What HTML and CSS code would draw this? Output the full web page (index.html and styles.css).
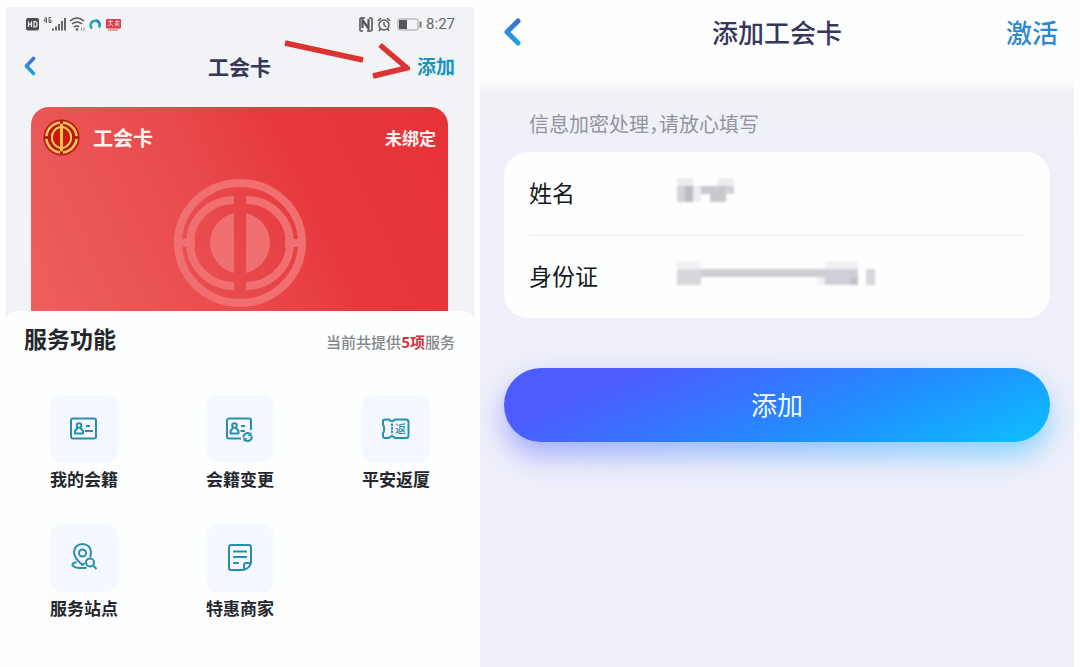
FILE: index.html
```html
<!DOCTYPE html>
<html lang="zh-CN">
<head>
<meta charset="utf-8">
<meta name="viewport" content="width=device-width, initial-scale=1">
<title>工会卡</title>
<link rel="stylesheet" href="styles.css">
</head>
<body>
<svg class="defs" width="0" height="0" aria-hidden="true">
  <defs>
    <linearGradient id="back-fill" x1="0" y1="0" x2="0" y2="1">
      <stop offset="0" stop-color="#3b6fd0"/><stop offset="1" stop-color="#22a6e0"/>
    </linearGradient>
    <symbol id="emblem" viewBox="0 0 134 130">
      <g fill="none" stroke="currentColor" stroke-width="8">
        <ellipse cx="67" cy="65" rx="62" ry="60"/>
        <path d="M61 22A44 43 0 0 0 61 108M73 22A44 43 0 0 1 73 108"/>
        <path d="M9 65H22M112 65H125"/>
      </g>
      <path fill="currentColor" d="M61 35A32 31 0 0 0 61 95ZM73 35A32 31 0 0 1 73 95Z"/>
    </symbol>
  </defs>
</svg>

<div class="screens">
  <section class="screen wallet">
    <div class="status">
      <div class="status-group">
        <svg width="100" height="18" viewBox="0 0 100 18" aria-hidden="true">
          <rect x="1" y="3" width="13" height="12.500" rx="2" fill="#4c4d50"/>
          <path d="M3.500 6.500v5.500M6.500 6.500v5.500M3.500 9.200h3M9 6.500v5.500h1q2 0 2-2.700t-2-2.800z" fill="none" stroke="#f4f5f7" stroke-width="1.200"/>
          <path d="M21 2l-2 4h3M21.500 3v5M26 2.500h-2v5h2V5h-1" fill="none" stroke="#55565a"/>
          <path d="M28 15.500v-2M31 15.500v-4M34 15.500V9M37 15.500V6M40 15.500V3" stroke="#55565a" stroke-width="1.800"/>
          <path d="M45 6q7-6 14 0M47 9q5-4 10 0M49 12q3-2 5 0" fill="none" stroke="#55565a" stroke-width="1.500"/>
          <circle cx="52" cy="14.500" r="1.300" fill="#55565a"/><path d="M56.500 12.500v3M59 12.500v3" stroke="#8a8b8e"/>
          <path d="M67 13.500a4.500 4.500 0 1 1 7-1" fill="none" stroke="#24a5ad" stroke-width="2.600"/>
          <path d="M71 5q4 1 4 6" fill="none" stroke="#3186c8" stroke-width="2"/>
          <rect x="81" y="4" width="15" height="9.500" rx="1" fill="#dc3d4b"/>
          <path d="M83 6.500h5M85.500 5v4M83 11l2.500-2 2.500 2M90 6.500h4.500M89.500 9h5M92 5v4l-2 2.500M92 9l2 2.500" fill="none" stroke="#fbd9d7" stroke-width=".9"/>
          <path d="M83 15h10" stroke="#ee8b63" stroke-width="1.500"/>
        </svg>
      </div>
      <div class="status-group">
        <svg width="64" height="18" viewBox="0 0 64 18" aria-hidden="true">
          <g fill="none" stroke="#55565a"><path d="M4.500 13V5l6 8.500V4" stroke-width="2.200"/><path d="M7 3H3q-1 0-1 1v11q0 1 1 1h2M9 16h4q1 0 1-1V4q0-1-1-1h-2" stroke-width="1.600"/></g>
          <g fill="none" stroke="#55565a" stroke-width="1.400"><circle cx="26" cy="10" r="5"/><path d="M26 7v3l2 2M20 6l3-3M32 6l-3-3M22.500 14l-1.500 2M29.500 14l1.500 2"/></g>
          <rect x="40" y="4" width="20" height="11" rx="1.500" fill="none" stroke="#9b9c9f"/>
          <rect x="41" y="5" width="8" height="9" fill="#55565a"/><path d="M62.500 6.500v6" stroke="#77787b" stroke-width="2"/>
        </svg>
        <span>8:27</span>
      </div>
    </div>

    <header class="nav">
      <button class="back" type="button" aria-label="返回">
        <svg width="12" height="20" viewBox="0 0 12 20"><path d="M9.500 2.500L2.500 10l7 7.500" fill="none" stroke="url(#back-fill)" stroke-width="3.600" stroke-linecap="round" stroke-linejoin="round"/></svg>
      </button>
      <h1>工会卡</h1>
      <a class="action" href="#add">添加</a>
    </header>
    <svg class="pointer" width="126" height="40" viewBox="0 0 126 40" aria-hidden="true">
      <g fill="none" stroke="#db332f" stroke-width="5.500"><path d="M1 3L79 20"/><path d="M96 5L123 28L89 36"/></g>
    </svg>

    <article class="card">
      <div class="card-head">
        <svg class="badge" viewBox="0 0 38 38" aria-hidden="true">
          <circle cx="19" cy="19" r="18.500" fill="#b51b16"/>
          <g fill="none" stroke="#f8c552" stroke-width="2.200">
            <path d="M17.500 3.500A15.600 15.600 0 0 0 3.500 17.500M3.500 20.500A15.600 15.600 0 0 0 17.500 34.500M20.500 3.500A15.600 15.600 0 0 1 34.500 17.500M34.500 20.500A15.600 15.600 0 0 1 20.500 34.500" stroke-width="2.600"/>
            <path d="M17.500 8.300A11 11 0 0 0 17.500 29.700M20.500 8.300A11 11 0 0 1 20.500 29.700"/>
            <circle cx="19" cy="19" r="7.500" fill="#cf160f" stroke="none"/>
            <path d="M19 5V33" stroke="#ffc64b" stroke-width="3"/>
            <path d="M3 19h5M30 19h5" stroke="#b51b16" stroke-width="2"/>
          </g>
        </svg>
        <h2>工会卡</h2>
        <span class="state">未绑定</span>
      </div>
      <svg class="watermark" aria-hidden="true"><use href="#emblem"/></svg>
    </article>

    <section class="sheet">
      <div class="sheet-head">
        <h2>服务功能</h2>
        <p>当前共提供<strong>5项</strong>服务</p>
      </div>
      <nav class="services">
        <a href="#membership">
          <span class="tile"><svg class="icon" viewBox="0 0 30 30"><rect x="2" y="4.500" width="25" height="20" rx="2"/><circle cx="10" cy="11.500" r="2.300"/><path d="M8.500 14L6 17v2.500h8V17l-2.500-3M17 12h4M16 17h8"/></svg></span>
          <span>我的会籍</span>
        </a>
        <a href="#change">
          <span class="tile"><svg class="icon" viewBox="0 0 30 30"><path d="M16 24.500H4a2 2 0 0 1-2-2v-16a2 2 0 0 1 2-2h20a2 2 0 0 1 2 2V16"/><circle cx="9.500" cy="11.500" r="2.300"/><path d="M8 14l-2.500 3v2.500h8V17L11 14M16 12h4M15.500 17h4.500"/><path d="M18.500 23.500a4 4 0 0 1 6.500-3.500M26.500 22a4 4 0 0 1-6.500 4"/><path class="solid" d="M26.500 18v4h-4zM18.500 28v-4h4z"/></svg></span>
          <span>会籍变更</span>
        </a>
        <a href="#return">
          <span class="tile"><svg class="icon" viewBox="0 0 30 30"><path d="M4 5.500h4q3 3.500 6 0h11q2.500 0 2.500 2.500v13.500q0 2.500-2.500 2.500H14q-3-3.500-6 0H4q-2 0-2-2v-2.500q2.500-4.500 0-9V7.500q0-2 2-2z"/><path d="M11 9.500v11" stroke-dasharray="2.500 1"/><text x="14" y="19">返</text></svg></span>
          <span>平安返厦</span>
        </a>
        <a href="#sites">
          <span class="tile"><svg class="icon" viewBox="0 0 30 30"><path d="M21 14q1-2 1-5a8.500 8 0 0 0-17 0q0 6 8.500 13l2-2"/><circle cx="13.500" cy="10" r="3.500"/><path d="M7.500 19c-8 2-4 6.500 8 6h2"/><circle cx="21" cy="19.500" r="4"/><path d="M24 22.500l3.500 3.500"/></svg></span>
          <span>服务站点</span>
        </a>
        <a href="#offers">
          <span class="tile"><svg class="icon" viewBox="0 0 30 30"><path d="M18 27H6a2 2 0 0 1-2-2V4a2 2 0 0 1 2-2h18a2 2 0 0 1 2 2v16q-2 6-8 7zM19 27v-5a2 2 0 0 1 2-2h5M8 8.500h14M8 14h14M8 20h6"/></svg></span>
          <span>特惠商家</span>
        </a>
      </nav>
    </section>
  </section>

  <section class="screen bind">
    <header class="nav">
      <button class="back" type="button" aria-label="返回">
        <svg width="18" height="28" viewBox="0 0 18 28"><path d="M15 3L4 14l11 11" fill="none" stroke="url(#back-fill)" stroke-width="5" stroke-linecap="round" stroke-linejoin="round"/></svg>
      </button>
      <h1>添加工会卡</h1>
      <a class="action" href="#activate">激活</a>
    </header>
    <form class="form" id="add">
      <p class="hint">信息加密处理，请放心填写</p>
      <div class="fields">
        <div class="field">
          <label for="name">姓名</label>
          <div class="value">
            <input id="name" type="text" autocomplete="off">
            <svg class="mosaic" width="60" height="34" viewBox="0 0 60 34" shape-rendering="crispEdges" aria-hidden="true">
              <path fill="#ececee" d="M0 2h16v8H0zM41 2h16v8H41zM16 10h8v16h-8z"/>
              <path fill="#d3d2d6" d="M0 10h8v16H0zM49 10h8v8h-8z"/>
              <path fill="#bdbcc2" d="M8 10h8v16H8z"/>
              <path fill="#c9c8cd" d="M24 10h25v16H33v-8h-9z"/>
            </svg>
          </div>
        </div>
        <div class="field">
          <label for="idno">身份证</label>
          <div class="value">
            <input id="idno" type="text" autocomplete="off">
            <svg class="mosaic" width="200" height="34" viewBox="0 0 200 34" shape-rendering="crispEdges" aria-hidden="true">
              <path fill="#f1f1f3" d="M0 2h24v8H0zM148 2h33v8h-33zM140 18h8v8h-8z"/>
              <path fill="#d8d7db" d="M0 10h24v16H0zM189 10h9v16h-9z"/>
              <path fill="#cfced3" d="M24 10h124v8H24z"/>
              <path fill="#d0cfd9" d="M148 10h33v16h-33z"/>
              <path fill="#c3c2cd" d="M173 18h8v8h-8z"/>
            </svg>
          </div>
        </div>
      </div>
      <button class="submit" type="button">添加</button>
    </form>
  </section>
</div>
</body>
</html>
```

FILE: styles.css
```css
* {
  box-sizing: border-box;
}

body {
  margin: 0;
  background: #fdfefe;
  color: #25272d;
  font-family: "Noto Sans CJK SC", "Noto Sans", sans-serif;
}

h1,
h2,
p {
  margin: 0;
}

a {
  color: inherit;
  text-decoration: none;
}

button {
  padding: 0;
  border: 0;
  background: none;
  font: inherit;
  cursor: pointer;
}

svg {
  display: block;
}

.defs {
  position: absolute;
}

.screens {
  display: grid;
  grid-template-columns: 468fr 594fr;
  gap: 6px;
  min-height: 100vh;
  padding: 0 6px;
}

.screen {
  display: flex;
  flex-direction: column;
}

.nav {
  display: grid;
  grid-template-columns: 1fr auto 1fr;
  align-items: center;
}

.nav h1 {
  color: #37375a;
  font-weight: 500;
}

.back {
  justify-self: start;
}

.action {
  justify-self: end;
}

/* Card overview */

.wallet {
  position: relative;
  margin-top: 7px;
  background: #f1f3f6;
}

.status {
  display: flex;
  justify-content: space-between;
  align-items: center;
  height: 34px;
  padding: 0 19px;
}

.status-group {
  display: flex;
  align-items: center;
  gap: 4px;
  color: #66676b;
  font: 15px/18px Roboto, sans-serif;
}

.wallet .nav {
  height: 50px;
  padding: 0 19px 0 18px;
}

.wallet .nav h1 {
  font-size: 21px;
  font-weight: 700;
  line-height: 30px;
}

.wallet .action {
  color: #1e93bd;
  font-size: 19px;
  font-weight: 700;
  line-height: 28px;
}

/* Annotation drawn across the navigation bar */
.pointer {
  position: absolute;
  top: 33px;
  right: 64px;
}

.card {
  height: 204px;
  margin: 16px 26px 0 25px;
  padding: 12px;
  border-radius: 18px 18px 0 0;
  background: linear-gradient(65deg, #ec605f 0%, #e8494c 45%, #e7393d 65%, #e63236 100%);
  color: #fff4f0;
  overflow: hidden;
}

.card-head {
  display: flex;
  align-items: center;
  gap: 13px;
}

.badge {
  width: 37px;
  height: 37px;
}

.card h2 {
  font-size: 20px;
  font-weight: 700;
  line-height: 28px;
}

.state {
  margin-left: auto;
  font-size: 17px;
  font-weight: 700;
  line-height: 26px;
}

.watermark {
  width: 134px;
  height: 130px;
  margin: 22px auto 0;
  color: #f07071;
}

.sheet {
  flex: 1;
  border-radius: 10px 10px 0 0;
  background: #fdfefe;
}

.sheet-head {
  display: flex;
  justify-content: space-between;
  align-items: baseline;
  padding: 10px 19px 0 18px;
}

.sheet-head h2 {
  font-size: 23px;
  font-weight: 700;
  line-height: 34px;
}

.sheet-head p {
  color: #84868b;
  font-size: 15px;
  font-weight: 500;
  line-height: 24px;
}

.sheet-head strong {
  color: #d3313b;
  font-weight: 700;
}

.services {
  display: grid;
  grid-template-columns: repeat(3, 1fr);
  row-gap: 32px;
  margin-top: 40px;
}

.services a {
  display: flex;
  flex-direction: column;
  align-items: center;
  gap: 3px;
  font-size: 17px;
  font-weight: 700;
  line-height: 26px;
}

.tile {
  display: grid;
  place-items: center;
  width: 68px;
  height: 68px;
  border-radius: 12px;
  background: #f5f8fe;
}

.icon {
  width: 30px;
  height: 30px;
  fill: none;
  stroke: #278fae;
  stroke-width: 2;
  stroke-linejoin: round;
}

.icon .solid {
  fill: #278fae;
  stroke: none;
}

.icon text {
  fill: #278fae;
  stroke: none;
  font-size: 11px;
  font-weight: 500;
}

/* Card binding form */

.bind {
  background: linear-gradient(#fdfefe 78px, #f1f1f5 94px, #efeffa 150px, #efeffa);
}

.bind .nav {
  height: 64px;
  padding: 0 16px;
}

.bind .back {
  margin-left: 7px;
}

.bind .nav h1,
.bind .action {
  font-size: 26px;
  line-height: 38px;
}

.bind .action {
  color: #2a89cf;
  font-weight: 500;
}

.form {
  padding: 46px 24px 0;
}

.hint {
  padding-left: 25px;
  color: #93949e;
  font-size: 20px;
  font-weight: 400;
  font-feature-settings: "halt";
  line-height: 28px;
}

.fields {
  margin-top: 14px;
  padding: 0 26px 0 25px;
  border-radius: 24px;
  background: #fdfefe;
}

.field {
  display: grid;
  grid-template-columns: 148px 1fr;
  align-items: center;
  height: 83px;
  padding-bottom: 4px;
}

.field + .field {
  border-top: 1px solid #eeeff2;
}

.field label {
  color: #17181b;
  font-size: 23px;
  line-height: 34px;
}

.value {
  position: relative;
}

.value input {
  display: block;
  width: 100%;
  height: 40px;
  padding: 0;
  border: 0;
  outline: 0;
  background: none;
  font: inherit;
  font-size: 23px;
}

/* Hides the private values */
.mosaic {
  position: absolute;
  top: 4px;
  left: 0;
  filter: blur(1px);
}

.submit {
  position: relative;
  z-index: 0;
  width: 100%;
  height: 74px;
  margin-top: 50px;
  padding-bottom: 2px;
  color: #f0fbff;
  font-size: 26px;
  line-height: 38px;
}

.submit::before,
.submit::after {
  content: "";
  position: absolute;
  inset: 0;
  z-index: -1;
  border-radius: 37px;
  background: linear-gradient(157deg, #4c5cff 20%, #2090ff 65%, #0cc0ff 100%);
}

.submit::before {
  top: 14px;
  bottom: -14px;
  filter: blur(14px);
  opacity: 0.45;
}
```
